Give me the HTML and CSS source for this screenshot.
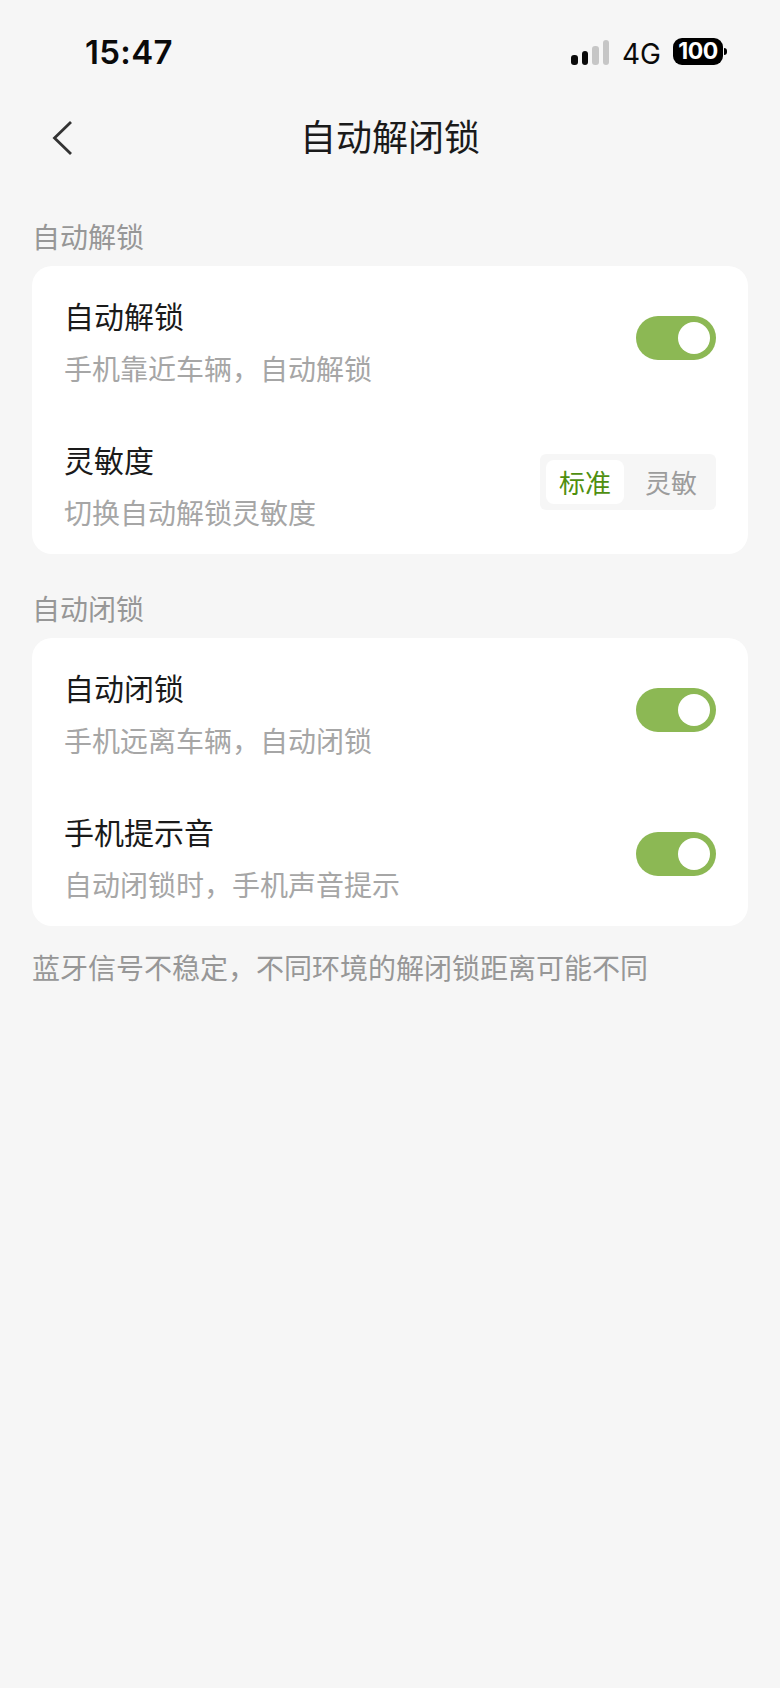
FILE: index.html
```html
<!DOCTYPE html>
<html lang="zh-CN">
<head>
    <meta charset="UTF-8">
    <meta name="viewport" content="width=device-width, initial-scale=1.0">
    <title>自动解闭锁</title>
    <link rel="stylesheet" href="styles.css">
</head>
<body>
    <div class="status-bar">
        <span class="time">15:47</span>
        <div class="status-right">
            <div class="signal">
                <span class="bar on b1"></span>
                <span class="bar on b2"></span>
                <span class="bar b3"></span>
                <span class="bar b4"></span>
            </div>
            <span class="network">4G</span>
            <div class="battery">100</div>
        </div>
    </div>

    <div class="nav">
        <svg class="back" width="22" height="36" viewBox="0 0 22 36" fill="none">
            <path d="M20 2 L3.500 18 L20 34" stroke="#333" stroke-width="2.800"/>
        </svg>
        <h1>自动解闭锁</h1>
    </div>

    <div class="content">
        <h2 class="section-title">自动解锁</h2>
        <div class="card">
            <div class="row">
                <div class="row-text">
                    <div class="row-title">自动解锁</div>
                    <div class="row-sub">手机靠近车辆，自动解锁</div>
                </div>
                <div class="toggle"></div>
            </div>
            <div class="row">
                <div class="row-text">
                    <div class="row-title">灵敏度</div>
                    <div class="row-sub">切换自动解锁灵敏度</div>
                </div>
                <div class="segment">
                    <span class="seg-item active">标准</span>
                    <span class="seg-item">灵敏</span>
                </div>
            </div>
        </div>

        <h2 class="section-title second">自动闭锁</h2>
        <div class="card">
            <div class="row">
                <div class="row-text">
                    <div class="row-title">自动闭锁</div>
                    <div class="row-sub">手机远离车辆，自动闭锁</div>
                </div>
                <div class="toggle"></div>
            </div>
            <div class="row">
                <div class="row-text">
                    <div class="row-title">手机提示音</div>
                    <div class="row-sub">自动闭锁时，手机声音提示</div>
                </div>
                <div class="toggle"></div>
            </div>
        </div>

        <p class="note">蓝牙信号不稳定，不同环境的解闭锁距离可能不同</p>
    </div>
</body>
</html>
```

FILE: styles.css
```css
* {
    margin: 0;
    padding: 0;
    box-sizing: border-box;
}

body {
    width: 780px;
    min-height: 1688px;
    background: #f6f6f6;
    font-family: "Noto Sans CJK SC", "Noto Sans", sans-serif;
    color: #1a1a1a;
    overflow: hidden;
}

.status-bar {
    height: 100px;
    padding: 32px 57px 0 85px;
    display: flex;
    justify-content: space-between;
    align-items: flex-start;
}

.time {
    font-family: Inter, sans-serif;
    font-size: 33px;
    line-height: 40px;
    font-weight: 600;
    letter-spacing: 0.3px;
    color: #0a0a0a;
}

.status-right {
    display: flex;
    align-items: center;
    height: 40px;
}

.signal {
    display: flex;
    align-items: flex-end;
    gap: 4px;
    height: 25px;
    margin-right: 13px;
}

.bar {
    width: 6.5px;
    border-radius: 3px;
    background: #c6c6c6;
}

.bar.on {
    background: #0a0a0a;
}

.b1 { height: 10px; }
.b2 { height: 14px; }
.b3 { height: 19px; }
.b4 { height: 25px; }

.network {
    font-family: Inter, sans-serif;
    font-size: 28px;
    line-height: 40px;
    padding-top: 3px;
    color: #0a0a0a;
    margin-right: 12px;
}

.battery {
    position: relative;
    width: 50px;
    height: 27px;
    margin-bottom: 2px;
    border-radius: 9px;
    background: #000;
    color: #fff;
    font-family: Inter, sans-serif;
    font-size: 23px;
    line-height: 27px;
    font-weight: 700;
    text-align: center;
    letter-spacing: -0.5px;
}

.battery::after {
    content: "";
    position: absolute;
    left: 51px;
    top: 10px;
    width: 3px;
    height: 7px;
    border-radius: 0 4px 4px 0;
    background: #000;
}

.nav {
    position: relative;
    height: 76px;
    padding-bottom: 6px;
    display: flex;
    justify-content: center;
    align-items: center;
}

.nav h1 {
    font-size: 36px;
    line-height: 50px;
    font-weight: 400;
    color: #1a1a1a;
}

.back {
    position: absolute;
    left: 51px;
    top: 20px;
}

.content {
    padding: 40px 32px 0;
}

.section-title {
    font-size: 28px;
    line-height: 40px;
    font-weight: 400;
    color: #979797;
    margin-bottom: 10px;
}

.section-title.second {
    margin-top: 34px;
}

.card {
    background: #fff;
    border-radius: 20px;
    padding: 0 32px;
}

.row {
    height: 144px;
    display: flex;
    justify-content: space-between;
    align-items: center;
}

.row-text {
    padding-top: 7px;
}

.row-title {
    font-size: 30px;
    line-height: 40px;
    color: #1a1a1a;
}

.row-sub {
    font-size: 28px;
    line-height: 40px;
    margin-top: 13px;
    color: #a6a6a6;
}

.toggle {
    position: relative;
    width: 80px;
    height: 44px;
    border-radius: 22px;
    background: #8cb854;
}

.toggle::after {
    content: "";
    position: absolute;
    right: 6px;
    top: 6px;
    width: 32px;
    height: 32px;
    border-radius: 50%;
    background: #fff;
}

.segment {
    width: 176px;
    height: 56px;
    padding: 6px;
    border-radius: 6px;
    background: #f6f6f6;
    display: flex;
}

.seg-item {
    flex: 1;
    padding-left: 8px;
    border-radius: 8px;
    font-size: 26px;
    line-height: 44px;
    text-align: center;
    color: #9c9c9c;
}

.seg-item.active {
    flex: 0 0 78px;
    padding-left: 0;
    background: #fff;
    color: #4f8f10;
}

.note {
    margin-top: 21px;
    font-size: 28px;
    line-height: 40px;
    color: #979797;
}
```
